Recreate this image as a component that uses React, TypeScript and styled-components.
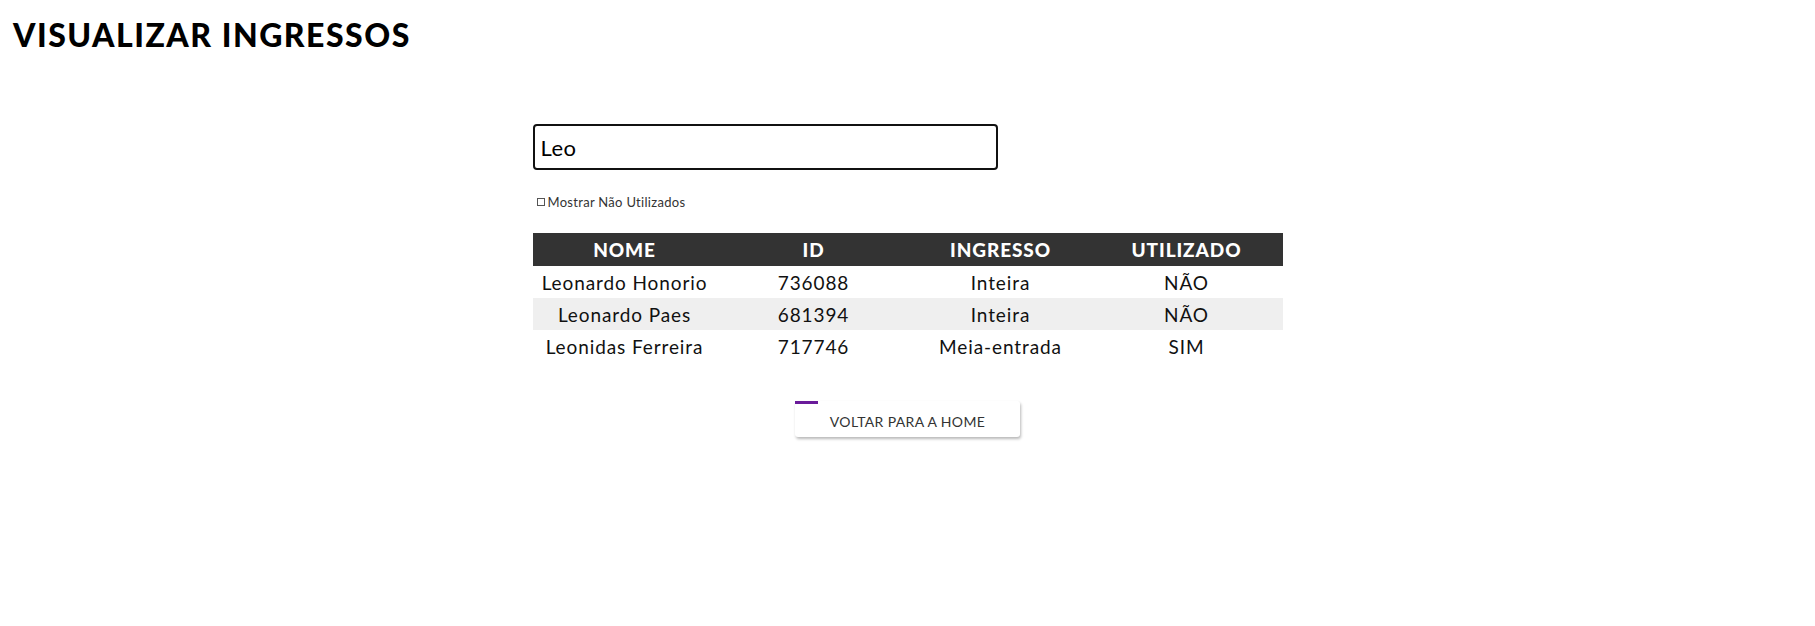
import React, { useState } from "react";
import styled, { createGlobalStyle } from "styled-components";

const GlobalStyle = createGlobalStyle`
  html, body { margin: 0; padding: 0; background: #ffffff; }
  body { font-family: "Lato", "Liberation Sans", sans-serif; color: #111; }
`;

const Page = styled.div`
  display: flex;
  flex-direction: column;
  padding: 15px 14px 40px 13px;
`;

const Title = styled.h1`
  margin: 0;
  font-family: "Lato", sans-serif;
  font-weight: 900;
  font-size: 32px;
  line-height: 40px;
  letter-spacing: 1.5px;
  color: #000;
`;

const Content = styled.div`
  width: 750px;
  align-self: center;
  margin-left: 1px;
  display: flex;
  flex-direction: column;
  margin-top: 69px;
`;

const SearchInput = styled.input`
  box-sizing: border-box;
  width: 465px;
  height: 46px;
  border: 2px solid #111;
  border-radius: 4px;
  padding: 0 6px;
  font-family: "Lato", sans-serif;
  font-size: 22px;
  letter-spacing: 0.5px;
  color: #000;
  outline: none;
`;

const CheckRow = styled.label`
  display: flex;
  align-items: center;
  gap: 3px;
  margin-top: 25px;
  margin-left: 4px;
  font-size: 13px;
  letter-spacing: 0.3px;
  color: #333;
  line-height: 14px;
`;

const Box = styled.span`
  width: 6px;
  height: 6px;
  border: 1px solid #555;
  background: #fff;
`;

const Table = styled.table`
  margin-top: 24px;
  width: 750px;
  border-collapse: collapse;
  table-layout: fixed;
`;

const Th = styled.th<{ $w: number }>`
  width: ${(p) => p.$w}px;
  height: 33px;
  padding: 0;
  background: #333333;
  color: #fff;
  font-weight: 900;
  font-size: 19px;
  letter-spacing: 0.9px;
  text-align: center;
`;

const Tr = styled.tr<{ $alt: boolean }>`
  background: ${(p) => (p.$alt ? "#efefef" : "#ffffff")};
`;

const Td = styled.td`
  height: 32px;
  padding: 0;
  text-align: center;
  font-size: 19px;
  letter-spacing: 0.9px;
  color: #111;
`;

const ButtonWrap = styled.div`
  align-self: center;
  margin-top: 39px;
  position: relative;
`;

const Accent = styled.span`
  position: absolute;
  left: 0;
  top: 0;
  width: 23px;
  height: 3px;
  background: #6a1b9a;
`;

const HomeButton = styled.button`
  width: 225px;
  height: 36px;
  padding: 4px 0 0;
  border: none;
  border-radius: 3px;
  background: #fff;
  box-shadow: 1px 2px 3px rgba(0, 0, 0, 0.28);
  font-family: "Lato", sans-serif;
  font-size: 14px;
  letter-spacing: 0.35px;
  color: #333;
  cursor: pointer;
`;

const rows = [
  { nome: "Leonardo Honorio", id: "736088", ingresso: "Inteira", usado: "NÃO" },
  { nome: "Leonardo Paes", id: "681394", ingresso: "Inteira", usado: "NÃO" },
  { nome: "Leonidas Ferreira", id: "717746", ingresso: "Meia-entrada", usado: "SIM" },
];

export default function App() {
  const [q, setQ] = useState("Leo");
  return (
    <Page>
      <GlobalStyle />
      <Title>VISUALIZAR INGRESSOS</Title>
      <Content>
        <SearchInput value={q} onChange={(e) => setQ(e.target.value)} />
        <CheckRow>
          <Box />
          Mostrar Não Utilizados
        </CheckRow>
        <Table>
          <thead>
            <tr>
              <Th $w={184}>NOME</Th>
              <Th $w={194}>ID</Th>
              <Th $w={180}>INGRESSO</Th>
              <Th $w={192}>UTILIZADO</Th>
            </tr>
          </thead>
          <tbody>
            {rows.map((r, i) => (
              <Tr key={r.id} $alt={i % 2 === 1}>
                <Td>{r.nome}</Td>
                <Td>{r.id}</Td>
                <Td>{r.ingresso}</Td>
                <Td>{r.usado}</Td>
              </Tr>
            ))}
          </tbody>
        </Table>
        <ButtonWrap>
          <Accent />
          <HomeButton>VOLTAR PARA A HOME</HomeButton>
        </ButtonWrap>
      </Content>
    </Page>
  );
}
